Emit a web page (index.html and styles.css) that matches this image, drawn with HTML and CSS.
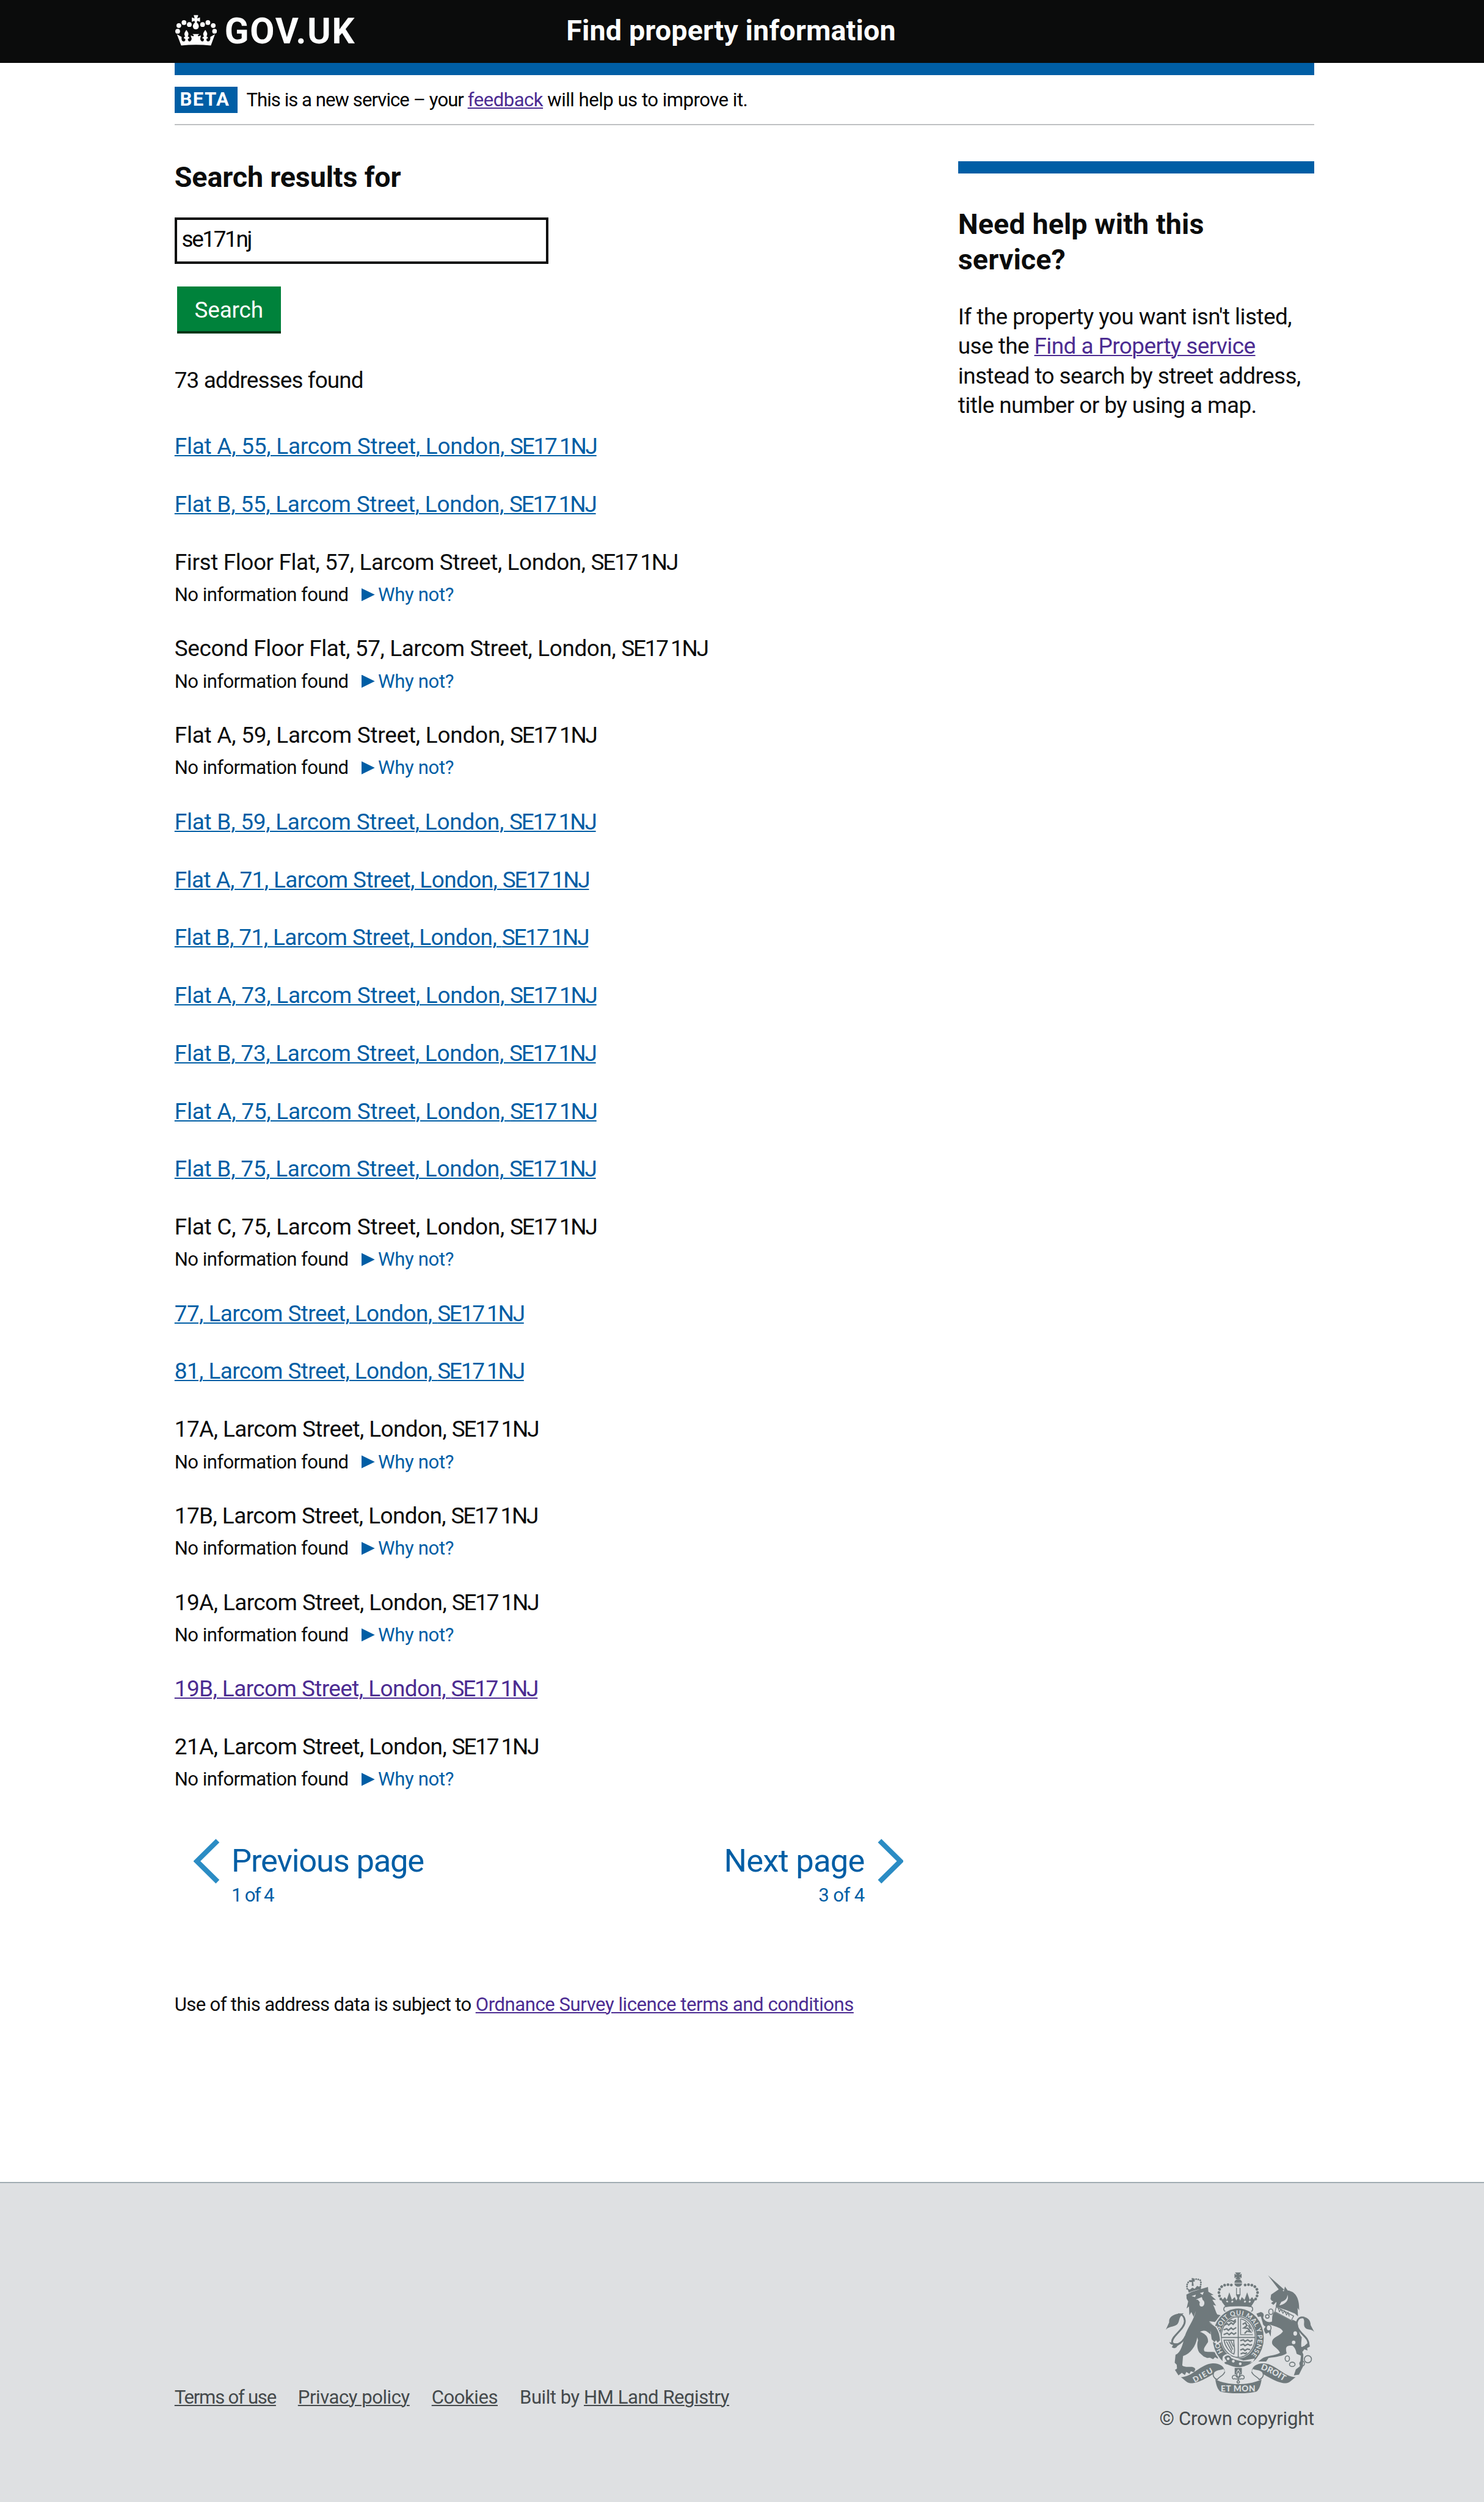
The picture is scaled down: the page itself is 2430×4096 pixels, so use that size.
FILE: index.html
```html
<!DOCTYPE html>
<html lang="en">
<head>
<meta charset="utf-8">
<title>Find property information - GOV.UK</title>
<link rel="stylesheet" href="styles.css">
</head>
<body>
<header class="header">
  <div class="wrap header-grid">
    <a class="logo" href="#">
      <svg class="crown" viewBox="30 12 211 157" aria-hidden="true">
        <circle cx="48" cy="67" r="12"/><circle cx="74" cy="52" r="12"/><circle cx="101" cy="62" r="12"/>
        <circle cx="168" cy="62" r="12"/><circle cx="195" cy="52" r="12"/><circle cx="222" cy="67" r="12"/>
        <circle cx="42" cy="96" r="12"/><circle cx="229" cy="96" r="12"/>
        <path d="M123 14h23l-5 17 14-5v22l-14-5-2 9c9 7 12 17 9 24-2 7-7 10-14 10s-12-3-14-10c-3-7 0-17 9-24l-2-9-13 5V26l14 5z"/>
        <path d="M60 168L38 111l24 14c-2 17 4 26 15 21 6-3 6-14-4-14 0-5 3-9 8-10-9-11-4-20 5-33 10 13 15 22 6 33 6 1 9 5 9 10-9 0-9 10-3 14 8 4 13-3 15-12l-5-17 13 5c2-3 3-4 3-6l-7-6h35l-8 6c0 2 1 3 3 6l13-5-4 17c2 9 7 16 15 12 6-4 6-14-4-14 0-5 4-9 9-10-9-11-4-20 6-33 9 13 14 22 5 33 5 1 8 5 8 10-10 0-9 11-3 14 10 5 17-4 15-21l24-14-21 57c-51-5-99-5-151 0z"/>
      </svg>
      <span class="logo-text">GOV.UK</span>
    </a>
    <a class="service-name" href="#">Find property information</a>
  </div>
</header>

<div class="wrap">
  <div class="phase">
    <strong class="phase-tag">BETA</strong>
    <span class="phase-text"><span class="phase-lead">This is a new service – your </span><a class="visited" href="#">feedback</a> will help us to improve it.</span>
  </div>

  <div class="columns">
    <main class="main">
      <h1 class="heading">Search results for</h1>
      <form class="search">
        <input class="search-input" type="text" value="se171nj" aria-label="Postcode">
        <button class="search-button" type="button">Search</button>
      </form>
      <p class="count">73 addresses found</p>

      <ul class="results">
        <li><a href="#">Flat A, 55, Larcom Street, London, <span class="pc">SE17 1NJ</span></a></li>
        <li><a href="#">Flat B, 55, Larcom Street, London, <span class="pc">SE17 1NJ</span></a></li>
        <li class="snug">First Floor Flat, 57, Larcom Street, London, <span class="pc">SE17 1NJ</span><div class="note">No information found<span class="why">Why not?</span></div></li>
        <li class="snug">Second Floor Flat, 57, Larcom Street, London, <span class="pc">SE17 1NJ</span><div class="note">No information found<span class="why">Why not?</span></div></li>
        <li>Flat A, 59, Larcom Street, London, <span class="pc">SE17 1NJ</span><div class="note">No information found<span class="why">Why not?</span></div></li>
        <li><a href="#">Flat B, 59, Larcom Street, London, <span class="pc">SE17 1NJ</span></a></li>
        <li class="tight"><a href="#">Flat A, 71, Larcom Street, London, <span class="pc">SE17 1NJ</span></a></li>
        <li class="tight"><a href="#">Flat B, 71, Larcom Street, London, <span class="pc">SE17 1NJ</span></a></li>
        <li><a href="#">Flat A, 73, Larcom Street, London, <span class="pc">SE17 1NJ</span></a></li>
        <li><a href="#">Flat B, 73, Larcom Street, London, <span class="pc">SE17 1NJ</span></a></li>
        <li><a href="#">Flat A, 75, Larcom Street, London, <span class="pc">SE17 1NJ</span></a></li>
        <li><a href="#">Flat B, 75, Larcom Street, London, <span class="pc">SE17 1NJ</span></a></li>
        <li>Flat C, 75, Larcom Street, London, <span class="pc">SE17 1NJ</span><div class="note">No information found<span class="why">Why not?</span></div></li>
        <li class="tight"><a href="#">77, Larcom Street, London, <span class="pc">SE17 1NJ</span></a></li>
        <li class="tight"><a href="#">81, Larcom Street, London, <span class="pc">SE17 1NJ</span></a></li>
        <li class="tight">17A, Larcom Street, London, <span class="pc">SE17 1NJ</span><div class="note">No information found<span class="why">Why not?</span></div></li>
        <li class="tight">17B, Larcom Street, London, <span class="pc">SE17 1NJ</span><div class="note">No information found<span class="why">Why not?</span></div></li>
        <li class="tight">19A, Larcom Street, London, <span class="pc">SE17 1NJ</span><div class="note">No information found<span class="why">Why not?</span></div></li>
        <li class="tight"><a class="visited" href="#">19B, Larcom Street, London, <span class="pc">SE17 1NJ</span></a></li>
        <li class="tight">21A, Larcom Street, London, <span class="pc">SE17 1NJ</span><div class="note">No information found<span class="why">Why not?</span></div></li>
      </ul>

      <nav class="pager">
        <a class="pager-link" href="#">
          <svg class="chevron" viewBox="0 0 44 76" aria-hidden="true"><path d="M40.500 3.500L5.500 38l35 34.500"/></svg>
          <span class="pager-text"><span class="pager-title">Previous page</span><span class="pager-count">1 of 4</span></span>
        </a>
        <a class="pager-link pager-next" href="#">
          <span class="pager-text"><span class="pager-title">Next page</span><span class="pager-count">3 of 4</span></span>
          <svg class="chevron" viewBox="0 0 44 76" aria-hidden="true"><path d="M3.500 3.500L38.500 38l-35 34.500"/></svg>
        </a>
      </nav>

      <p class="licence">Use of this address data is subject to <a class="visited licence-link" href="#">Ordnance Survey licence terms and conditions</a></p>
    </main>

    <aside class="aside">
      <h2 class="heading aside-heading">Need help with this service?</h2>
      <p class="aside-text">If the property you want isn't listed, use the <a class="visited" href="#">Find a Property service</a> instead to search by street address, title number or by using a map.</p>
    </aside>
  </div>
</div>

<footer class="footer">
  <div class="wrap footer-row">
    <ul class="footer-links">
      <li class="terms"><a href="#">Terms of use</a></li>
      <li><a href="#">Privacy policy</a></li>
      <li><a href="#">Cookies</a></li>
      <li>Built by <a href="#">HM Land Registry</a></li>
    </ul>
    <div class="copyright">
      <svg class="arms" viewBox="132 135 750 612" aria-hidden="true">
        <defs>
          <path id="garter" d="M430 549A98 115 0 1 1 566 549"/>
          <path id="droit" d="M610 625Q660 640 735 690"/>
        </defs>
        <!-- lion -->
        <g class="ink">
          <path d="M236 248l26-14 83-25 2 24 26 16-14 2 27 24-19-2 19 31-15-5c10 17 12 35 21 49l18 4-16 20-14 14-30-4 32 28c16 22 24 50 26 74l-13 4-8-8-6 10-14-14-4-24-18-14c-16-14-30-8-40-2 20 6 44 22 40 52-12 20-26 32-18 46 20 8 58-6 72 18l-4 20-14-8-10 10-16-8-14 2-18-8-22-20c-12-20-12-44-6-62l-4-14c-8 46-34 82-72 94l-4 48c20 16 56-4 66 18l-6 16-16-6-8 14-18-12-12 14-20-20-12-4-2-24-10-10 4-40c28-14 36-54 44-84 14-54 50-90 58-138l-10 30-12-24-10 16-2-44-12 10 8-36-8-14z"/>
          <path d="M178 628l12-8c26-6 60-12 78 6l2 12-14-4-4 12-16-8-8 16-14-12-18 14z"/>
          <path d="M222 343c-40-2-78 14-73 44l-17 38c14-18 44-14 58-28 14-16 4-36 32-54z"/>
          <path d="M150 488c4 14 16 14 20 12l-8 14c14 8 22 4 28-6l20-14-32 0z"/>
          <path d="M248 238l-6-20 12 4 12-10 12 6 12-14 12 4 8-4-1 18c-20 0-42 6-61 16z"/>
          <path d="M262 164h10l-2 8h8v10h-8l3 22h-10l1-20h-9v-10h9z"/>
        </g>
        <path class="line w8" d="M232 458c-20 44-62 52-68 30-6-30 66-66 64-108-2-24-16-34-34-33"/>
        <path class="beads" d="M240 218l-2-18 8-16 14-10M274 170l16-1 16 6 4 14-4 20"/>
        <path class="pale" d="M262 255l22-7-4 12zM304 240l20-6-6 15zM284 272l30-12 4 14c16 10 8 34-4 34s-14-12-10-22l-10-12z"/>
        <!-- unicorn -->
        <g class="ink">
          <path d="M648 150l82 72-18 12z"/>
          <path d="M728 232l6-25 14 20c36 4 60 34 58 100l-8-12 2 42-16-14-40-16-56-18c-2-6 6-18 2-24l-14 14-12-8 12-10-8-2-7-9 3-22 46-32z"/>
          <path d="M682 332c-18 24-10 34-14 52-20 8-42-6-44-22 6-14 2-22-12-26l-22 8 8 16 14-2 10 34c0 10 12 16 14 18l-12 16 14 20 14-8 10 22 2-30-14-20 6-12c20 10 60 14 68 36-20 28-58 28-55 60 2 14 34 28 40 48-28 16-72 14-92 30l-18 14h40l12-18c40-6 76-10 92-24-8-30-4-40 30-38 14 14 16 22 20 40 4 4 14 6 22 10l-6 54-20 16-10 30 26-4 20-40 2-62c-16-34-10-60-8-88-14-10-16-50-22-76z"/>
          <path d="M822 360c24 0 42 14 42 42l18 34c-14-18-36-6-48-24-10-18 6-30-12-52z"/>
          <path d="M800 510l26 2 18-16 12-8 4 22-14 8 2 12-16-6-10 14-6-14z"/>
        </g>
        <path class="line w8" d="M832 364c-30-8-46 20-34 50 14 34 58 52 54 84-2 14-16 18-28 14"/>
        <path class="pale" d="M690 308l92 50-14 22-88-46z"/>
        <path class="line w4" d="M690 310l88 46-12 22-82-44zM700 316l6 18 8-12 10 20 8-12 10 20 8-12 6 20"/>
        <path class="pale" d="M716 284c18-4 32-18 30-36 12 28-12 50-40 54z"/>
        <g class="line w5">
          <ellipse cx="663" cy="334" rx="11" ry="14"/><ellipse cx="645" cy="358" rx="9" ry="9"/><ellipse class="cloth" cx="652" cy="416" rx="12" ry="15"/>
          <ellipse class="cloth" cx="786" cy="444" rx="12" ry="14"/><ellipse cx="746" cy="571" rx="11" ry="14"/>
          <ellipse cx="771" cy="600" rx="14" ry="11"/><ellipse cx="821" cy="596" rx="12" ry="12"/><circle cx="850" cy="574" r="18"/>
        </g>
        <circle class="pale" cx="778" cy="489" r="9"/><circle class="pale" cx="755" cy="524" r="9"/>
        <!-- central crown -->
        <g class="ink">
          <path d="M482 136h30l-9 13 12-7v22l-12-6 8 11h-28l8-11-12 6v-22l12 7z"/>
          <path d="M479 188c0-24 38-24 38 0zM479 191h38c0 22-38 22-38 0z"/>
          <path d="M418 288l-12-26 14 10 10-12 10 14 13-38 13 38 14-14 8 18 6-12-8-20h24l-8 20 6 12 8-18 14 14 13-38 13 38 12-14 8 12 14-10-14 26-12 18H432z"/>
          <path d="M432 310c30-6 100-6 132 0v-14H432z"/>
        </g>
        <path class="pale" d="M436 280l8-2 4 8h-8zM462 286l4-8 8 2-4 8zM526 286l4-8 8 2-4 8zM550 286l4-8 8 2-4 8z"/>
        <path class="beads big" d="M410 270c-28-50 8-86 66-68M586 270c28-50-8-86-66-68"/>
        <path class="line w4" d="M489 214v34M507 214v34"/>
        <path class="line w5" d="M436 334c-16-4-14-26 2-26 40-8 80-8 120 0 16 0 18 22 2 26"/>
        <!-- garter and shield -->
        <ellipse class="pale" cx="498" cy="466" rx="136" ry="152"/>
        <ellipse class="ink" cx="498" cy="466" rx="129" ry="148"/>
        <ellipse class="pale" cx="498" cy="462" rx="91" ry="108"/>
        <ellipse class="line w5" cx="498" cy="462" rx="86" ry="103"/>
        <path class="line w5" d="M498 358v208M411 464h174"/>
        <path class="line w7" d="M428 402l14-8 8 8 12-12 10 8 14-16M424 426l16-6 8 8 14-12 10 8 16-10M424 450l18-8 10 8 12-10 12 8 12-8M448 384l16-6 10 6 12-10"/>
        <path class="line w4" d="M510 370v80h62M510 370c30 6 54 32 60 64"/>
        <path class="line w7" d="M520 398l14-8 8 14-16 12 20 2 14 18-18-4-12 12M550 402l10 20"/>
        <path class="line w5" d="M426 478l50 0c-4 20 10 44 0 70-24-10-44-38-50-70zM438 484l28 52M450 482l20 44M460 480l14 30"/>
        <path class="line w7" d="M508 480l16-4 8 8 14-8 12 8 12-6M508 504l16-6 8 8 14-8 12 6 10-4M508 528l14-6 10 8 12-8 14 4M510 548l12-6 12 4 8-6"/>
        <text class="motto ring"><textPath href="#garter" startOffset="14">HO</textPath></text>
        <text class="motto ring"><textPath href="#garter" startOffset="128" textLength="390">SOIT QUI MAL Y PENSE</textPath></text>
        <path class="pale" d="M352 388l36 20c18 24 24 48 24 78l-20 14-30-20z"/>
        <path class="ink" d="M348 386l36 26c16 22 20 44 22 66l-12 12-8-12-8 10-14-14-6-40-26-20z"/>
        <path class="pale" d="M420 560c14-16 34-16 44 0l60 20 58-10-10 18-40 12-88-6c-20 8-30-10-24-34z"/>
        <path class="ink" d="M428 566c8-16 30-14 34 2 36 18 66 18 104 16-40 40-84 30-112 12-10 8-26 2-26-6l12-4z"/>
        <circle class="pale" cx="447" cy="572" r="7"/><circle class="pale" cx="473" cy="584" r="7"/><circle class="pale" cx="508" cy="597" r="7"/>
        <!-- fleur-de-lis -->
        <path class="ink" d="M480 618h36v36h-36z"/>
        <path class="pale" d="M498 624c-14 18-12 24-4 36-8-16-28-12-28 4 0 10 8 14 14 12l8 4v14h20v-14l8-4c8 2 14-2 14-12 0-16-20-20-28-4 8-12 10-18-4-36z"/>
        <path class="line w5" d="M498 634c-10 14-10 20 0 34 10-14 10-20 0-34zM492 668c-4-18-26-16-24 0 2 8 12 8 12 2M504 668c4-18 26-16 24 0-2 8-12 8-12 2M482 674h32M498 668v14"/>
        <circle class="line w5" cx="498" cy="689" r="6"/>
        <!-- banner -->
        <path class="ink" d="M208 665c60-2 100-66 160-70 34-2 62 16 62 42-10-8-26-8-36 0-40 20-94 60-138 58-20-2-32-20-48-30z"/>
        <path class="ink" d="M788 665c-60-2-100-66-160-70-34-2-62 16-62 42 10-8 26-8 36 0 40 20 94 60 138 58 20-2 32-20 48-30z"/>
        <path class="line w5 cloth" d="M430 637c-4 20-28 24-38 40-14-4-26-20-18-36 6-16 36-14 50-20"/>
        <path class="line w5 cloth" d="M566 637c4 20 28 24 38 40 14-4 26-20 18-36-6-16-36-14-50-20"/>
        <path class="ink" d="M382 676c60 32 172 32 234 0-4 28-12 52-26 62-52 12-130 12-182 0-14-10-22-34-26-62z"/>
        <text class="motto dieu" x="-56" y="6" transform="translate(324 660) rotate(-29)" textLength="108">DIEU</text>
        <text class="motto" x="410" y="737" textLength="174">ET MON</text>
        <text class="motto"><textPath href="#droit" textLength="132">DROIT</textPath></text>
      </svg>
      <a class="copyright-text" href="#">© Crown copyright</a>
    </div>
  </div>
</footer>
</body>
</html>
```
FILE: styles.css
```css
/* 1rem is 97.2px; lengths below are multiples of that unit */
html { font-size: 97.2px; }
* { box-sizing: border-box; }
body {
  margin: 0;
  background: #fff;
  color: #0b0c0c;
  font-family: Roboto, "Liberation Sans", Arial, sans-serif;
  font-size: .38rem;
  line-height: .5rem;
  letter-spacing: -.0178em;
}
h1, h2, p, ul { margin: 0; padding: 0; }
ul { list-style: none; }
a {
  color: #005ea5;
  text-decoration-thickness: 2px;
  text-underline-offset: 2px;
}
a.visited { color: #4c2c92; }
.wrap { width: 19.2rem; margin-left: 2.94rem; }

/* Header */
.header { background: #0b0c0c; height: 1.06rem; }
.header-grid { display: grid; grid-template-columns: 6.6rem 1fr; align-items: center; }
.logo { display: flex; align-items: center; color: #fff; text-decoration: none; }
.crown { width: .703rem; height: .523rem; margin: 0 .13rem .05rem .01rem; fill: #fff; }
.logo-text { font-size: .6rem; font-weight: 700; line-height: 1.06rem; letter-spacing: .032em; }
.service-name {
  color: #fff;
  font-size: .48rem;
  font-weight: 700;
  line-height: 1.03rem;
  padding-bottom: .03rem;
  letter-spacing: .003em;
  text-decoration: none;
}

/* Phase banner */
.phase {
  display: flex;
  align-items: center;
  border-top: 20px solid #005ea5;
  border-bottom: 2px solid #bfc1c3;
  padding: .195rem 0 .19rem;
  font-size: .32rem;
  line-height: .44rem;
}
.phase-tag {
  background: #005ea5;
  color: #fff;
  width: 1.06rem;
  height: .44rem;
  line-height: .44rem;
  padding-left: .09rem;
  margin-right: .15rem;
  letter-spacing: .045em;
}
.phase-text { color: #000; line-height: .455rem; height: .44rem; letter-spacing: -.016em; }
.phase-lead { letter-spacing: -.0305em; }

/* Columns */
.columns { display: flex; justify-content: space-between; align-items: flex-start; }
.main { width: 12.28rem; padding-top: .57rem; }
.heading { font-size: .48rem; line-height: .6rem; font-weight: 700; letter-spacing: -.003em; }
.search { display: flex; flex-direction: column; align-items: flex-start; gap: .38rem; margin-top: .38rem; }
.search-input {
  width: 6.3rem;
  height: .78rem;
  border: 4px solid #0b0c0c;
  padding: 0 .08rem .04rem;
  color: #000;
  font: inherit;
  letter-spacing: -.065em;
  border-radius: 0;
}
.search-button {
  width: 1.75rem;
  height: .8rem;
  margin-left: .04rem;
  padding: .01rem 0 0;
  border: 0;
  box-shadow: inset 0 -.04rem 0 #003618;
  background: #00823b;
  color: #fff;
  font: inherit;
  letter-spacing: -.005em;
}
.count { margin-top: .545rem; letter-spacing: -.025em; }

/* Results */
.results { margin-top: .61rem; }
.results li { padding-bottom: .475rem; letter-spacing: -.006em; }
.results .tight { letter-spacing: -.0155em; }
.results .snug { letter-spacing: -.0105em; }
.pc { letter-spacing: -.06em; word-spacing: -.045em; }
.note {
  display: flex;
  align-items: center;
  margin-top: .1rem;
  font-size: .32rem;
  line-height: .383rem;
  letter-spacing: -.0187em;
}
.why { display: flex; align-items: center; margin-left: .22rem; color: #005ea5; letter-spacing: -.012em; }
.why::before {
  content: "";
  width: .225rem;
  height: .22rem;
  margin-right: .055rem;
  background: #005ea5;
  clip-path: polygon(0 0, 100% 50%, 0 100%);
}

/* Pager */
.pager { display: flex; justify-content: space-between; margin-top: .33rem; padding-left: .32rem; }
.pager-link { display: flex; gap: .2rem; text-decoration: none; }
.pager-next { gap: .215rem; }
.pager-text { display: flex; flex-direction: column; padding-top: .075rem; }
.pager-title { font-size: .54rem; line-height: .6rem; letter-spacing: -.0225em; }
.pager-next .pager-title { letter-spacing: -.0137em; }
.pager-count { margin-top: .085rem; font-size: .32rem; line-height: .4rem; letter-spacing: -.055em; }
.pager-next .pager-count { text-align: right; letter-spacing: -.018em; }
.chevron { width: .44rem; height: .76rem; fill: none; stroke: #2b8cc4; stroke-width: 8.5; }

.licence { margin: 1.447rem 0 2.773rem; font-size: .32rem; line-height: .4rem; letter-spacing: -.021em; white-space: nowrap; }
.licence-link { letter-spacing: -.0145em; }

/* Sidebar */
.aside { width: 6rem; margin-top: .605rem; border-top: 20px solid #005ea5; }
.aside-heading { padding: .556rem .8rem 0 0; letter-spacing: .002em; }
.aside-text { margin-top: .41rem; letter-spacing: -.0155em; }

/* Footer */
.footer { height: 5.4rem; border-top: 2px solid #a1acb2; background: #dee0e2; }
.footer-row { display: flex; justify-content: space-between; align-items: flex-end; padding-top: 1.505rem; }
.footer, .footer a { color: #454a4c; }
.footer-links {
  display: flex;
  gap: .37rem;
  padding-bottom: .355rem;
  font-size: .32rem;
  line-height: .4rem;
  letter-spacing: -.015em;
}
.terms { letter-spacing: -.04em; }
.copyright { display: flex; flex-direction: column; align-items: flex-end; gap: .23rem; }
.copyright-text { font-size: .32rem; line-height: .4rem; letter-spacing: -.0073em; text-decoration: none; }

/* Royal coat of arms */
.arms { width: 2.5rem; height: 2.04rem; font-family: Lato, "Liberation Sans", sans-serif; letter-spacing: 0; }
.ink { fill: #6f797c; }
.pale { fill: #dee0e2; }
.line { fill: none; stroke: #6f797c; }
.line.cloth, .line .cloth { fill: #dee0e2; }
.w4 { stroke-width: 4; }
.w5 { stroke-width: 5; }
.w7 { stroke-width: 7; }
.w8 { stroke-width: 9; }
.beads { fill: none; stroke: #6f797c; stroke-width: 9; stroke-linecap: round; stroke-dasharray: .1 11; }
.beads.big { stroke-width: 14; stroke-dasharray: .1 17; }
.motto { fill: #dee0e2; font-size: 42px; font-weight: 900; }
.dieu { font-size: 38px; }
.ring { font-size: 33px; font-weight: 700; }
```
